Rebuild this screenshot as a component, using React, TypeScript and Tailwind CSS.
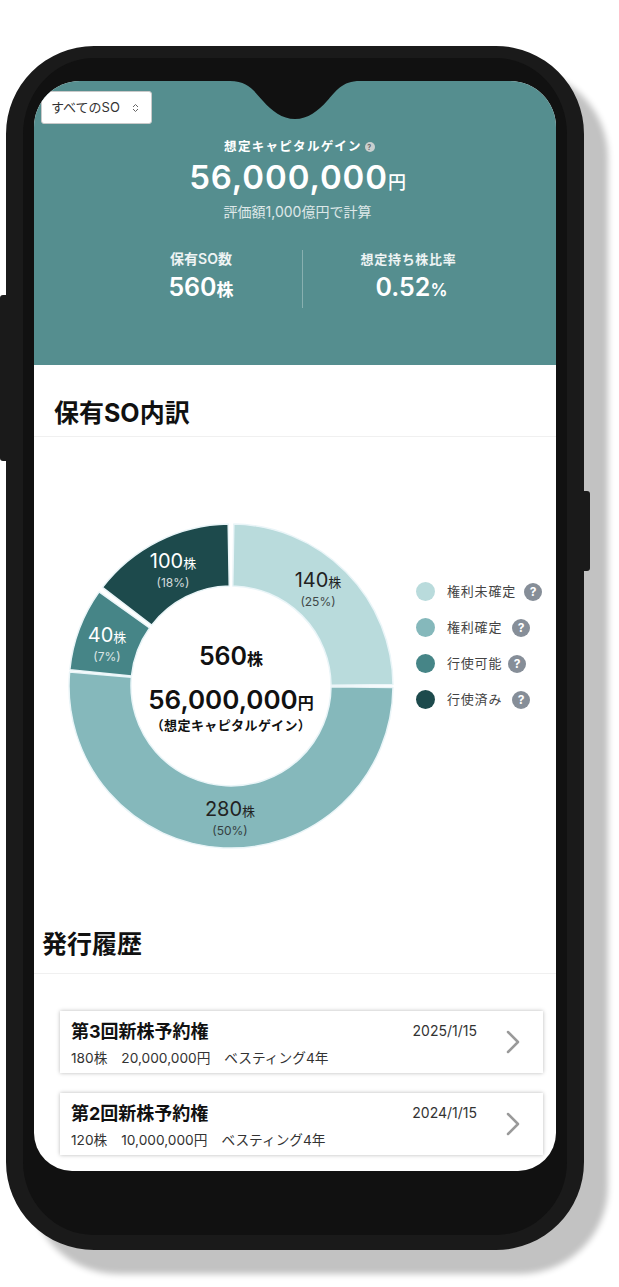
import { ChevronRight } from "lucide-react";

const FONT = "font-['Inter','Noto_Sans_CJK_JP',sans-serif]";

type Slice = {
  from: number;
  to: number;
  color: string;
};

const CX = 165;
const CY = 165;
const R_OUT = 162;
const R_IN = 100;

const slices: Slice[] = [
  { from: 1, to: 89.5, color: "#b9dbdc" },
  { from: 90.5, to: 275, color: "#85b8bb" },
  { from: 275.8, to: 305.5, color: "#468587" },
  { from: 307.5, to: 359, color: "#1d4a4c" },
];

function point(r: number, deg: number) {
  const a = ((deg - 90) * Math.PI) / 180;
  return `${(CX + r * Math.cos(a)).toFixed(2)} ${(CY + r * Math.sin(a)).toFixed(2)}`;
}

function slicePath({ from, to }: Slice) {
  const large = to - from > 180 ? 1 : 0;
  return [
    `M ${point(R_OUT, from)}`,
    `A ${R_OUT} ${R_OUT} 0 ${large} 1 ${point(R_OUT, to)}`,
    `L ${point(R_IN, to)}`,
    `A ${R_IN} ${R_IN} 0 ${large} 0 ${point(R_IN, from)}`,
    "Z",
  ].join(" ");
}

function SliceLabel({
  value,
  pct,
  className,
}: {
  value: string;
  pct: string;
  className: string;
}) {
  return (
    <div className={`absolute flex -translate-x-1/2 flex-col items-center whitespace-nowrap ${className}`}>
      <div className="text-[20px] leading-[22px]">
        {value}
        <span className="text-[13px]">株</span>
      </div>
      <div className="mt-[2px] text-[12px] leading-[14px] opacity-80">{pct}</div>
    </div>
  );
}

function HelpDot() {
  return (
    <span className="flex h-[18px] w-[18px] shrink-0 items-center justify-center rounded-full bg-[#868e98] text-[12px] font-bold leading-none text-white">
      ?
    </span>
  );
}

const legend = [
  { label: "権利未確定", color: "bg-[#b9dbdc]", gap: "mr-[8px]" },
  { label: "権利確定", color: "bg-[#85b8bb]", gap: "mr-[10px]" },
  { label: "行使可能", color: "bg-[#468587]", gap: "mr-[6px]" },
  { label: "行使済み", color: "bg-[#1d4a4c]", gap: "mr-[10px]" },
];

const grants = [
  {
    title: "第3回新株予約権",
    date: "2025/1/15",
    shares: "180株",
    amount: "20,000,000円",
    vest: "ベスティング4年",
  },
  {
    title: "第2回新株予約権",
    date: "2024/1/15",
    shares: "120株",
    amount: "10,000,000円",
    vest: "ベスティング4年",
  },
];

function GrantCard({ title, date, shares, amount, vest }: (typeof grants)[number]) {
  return (
    <div className="flex h-[62px] items-center justify-between bg-white pl-[11px] pr-[10px] shadow-[0_0_4px_rgba(0,0,0,0.28)]">
      <div className="min-w-0 flex-1 pt-[3px]">
        <div className="flex items-center justify-between pr-[16px]">
          <span className="text-[18px] font-bold leading-[24px] text-[#111]">{title}</span>
          <span className="mt-[-3px] text-[14px] text-[#333]">{date}</span>
        </div>
        <div className="mt-[5px] flex gap-[14px] text-[13.7px] leading-[18px] text-[#333]">
          <span>{shares}</span>
          <span>{amount}</span>
          <span>{vest}</span>
        </div>
      </div>
      <ChevronRight size={40} strokeWidth={1.5} className="shrink-0 text-[#9a9a9a]" />
    </div>
  );
}

export default function App() {
  return (
    <div className={`relative h-[1287px] w-[619px] overflow-hidden bg-white pl-[6px] pt-[46px] ${FONT}`}>
      {/* side buttons */}
      <div className="absolute left-0 top-[295px] h-[166px] w-[7px] rounded-l-[3px] bg-[#1a1a1a]" />
      <div className="absolute left-[583px] top-[491px] h-[80px] w-[7px] rounded-r-[3px] bg-[#1a1a1a]" />

      {/* phone */}
      <div className="h-[1204px] w-[578px] rounded-[88px] border-x-[17px] border-b-[15px] border-t-[12px] border-[#1a1a1a] bg-[#111] px-[11px] pt-[23px] shadow-[24px_24px_6px_#c2c2c2]">
        <div className="relative h-[1090px] w-[522px] overflow-hidden rounded-t-[46px] rounded-b-[38px] bg-white">
          {/* notch */}
          <svg className="absolute left-[196px] top-0 z-10" width="130" height="38" viewBox="0 0 130 38">
            <path
              d="M0 0 C18 0 24 10 33 20 C42 30 52 38 65 38 C78 38 88 30 97 20 C106 10 112 0 130 0 Z"
              fill="#111"
            />
          </svg>

          {/* header */}
          <header className="relative h-[284px] bg-[#558e8f] text-white">
            <div className="absolute left-[7px] top-[10px] flex h-[33px] w-[111px] items-center justify-between rounded-[3px] border border-[#c9c9c9] bg-white pl-[9px] pr-[12px] text-[13px] text-[#333]">
              <span>すべてのSO</span>
              <svg width="7" height="10" viewBox="0 0 7 10" fill="none" stroke="#666" strokeWidth="1">
                <path d="M1 4 L3.5 1.5 L6 4" />
                <path d="M1 6 L3.5 8.5 L6 6" />
              </svg>
            </div>

            <div className="flex flex-col items-center pt-[57px]">
              <div className="flex items-center pl-[9px] text-[12.5px] font-bold leading-[18px] tracking-[1.3px]">
                想定キャピタルゲイン
                <span className="ml-[3px] flex h-[10px] w-[10px] items-center justify-center rounded-full bg-[#c9cfcf] text-[7px] leading-none text-[#666]">
                  ?
                </span>
              </div>
              <div className="pl-[6px] text-[33px] font-semibold leading-[42px] tracking-[0.9px]">
                56,000,000<span className="text-[18px] font-medium">円</span>
              </div>
              <div className="mt-[-1px] pl-[5px] text-[14px] leading-[18px] text-white/80">評価額1,000億円で計算</div>
            </div>

            <div className="mt-[29px] grid grid-cols-[268px_1px_1fr]">
              <div className="flex flex-col items-center pl-[66px]">
                <div className="text-[14px] font-semibold leading-[18px] text-white/90">保有SO数</div>
                <div className="mt-[3px] text-[25px] font-semibold leading-[32px]">
                  560<span className="text-[17px]">株</span>
                </div>
              </div>
              <div className="h-[58px] bg-white/30" />
              <div className="flex flex-col items-center pr-[42px]">
                <div className="text-[13px] font-semibold leading-[18px] tracking-[0.7px] text-white/90">
                  想定持ち株比率
                </div>
                <div className="mt-[3px] pl-[6px] text-[25px] font-semibold leading-[32px]">
                  0.52<span className="text-[17px]">%</span>
                </div>
              </div>
            </div>
          </header>

          {/* breakdown */}
          <h2 className="h-[72px] border-b border-[#f0f0f0] pl-[20px] pt-[31px] text-[25px] font-bold leading-[34px] text-[#111]">
            保有SO内訳
          </h2>

          <div className="relative h-[465px]">
            <div className="absolute left-[32px] top-[84px] h-[330px] w-[330px] text-[#222]">
              <svg width="330" height="330" viewBox="0 0 330 330">
                {slices.map((s) => (
                  <path
                    key={s.color}
                    d={slicePath(s)}
                    fill={s.color}
                    stroke="#eaf5f8"
                    strokeWidth="1.5"
                    strokeLinejoin="round"
                  />
                ))}
              </svg>
              <SliceLabel value="140" pct="(25%)" className="left-[252px] top-[48px]" />
              <SliceLabel value="280" pct="(50%)" className="left-[164px] top-[277px]" />
              <SliceLabel value="40" pct="(7%)" className="left-[41px] top-[103px] text-white" />
              <SliceLabel value="100" pct="(18%)" className="left-[107px] top-[29px] text-white" />

              <div className="absolute left-[65px] top-[120px] flex w-[200px] flex-col items-center text-[#111]">
                <div className="text-[25px] font-semibold leading-[30px]">
                  560<span className="text-[16px]">株</span>
                </div>
                <div className="mt-[12px] whitespace-nowrap text-[26px] font-semibold leading-[28px]">
                  56,000,000<span className="text-[16px]">円</span>
                </div>
                <div className="whitespace-nowrap text-[13px] font-bold leading-[16px] tracking-[0.4px]">
                  （想定キャピタルゲイン）
                </div>
              </div>
            </div>

            <ul className="absolute left-[382px] top-[145px] flex flex-col gap-[17px]">
              {legend.map((item) => (
                <li key={item.label} className="flex h-[19px] items-center">
                  <span className={`h-[19px] w-[19px] rounded-full ${item.color}`} />
                  <span className={`ml-[12px] text-[13px] tracking-[0.8px] text-[#444] ${item.gap}`}>{item.label}</span>
                  <HelpDot />
                </li>
              ))}
            </ul>
          </div>

          {/* history */}
          <h2 className="h-[72px] border-b border-[#f0f0f0] pl-[8px] pt-[25px] text-[25px] font-bold leading-[34px] text-[#111]">
            発行履歴
          </h2>
          <div className="flex flex-col gap-[20px] pl-[26px] pr-[13px] pt-[37px]">
            {grants.map((g) => (
              <GrantCard key={g.title} {...g} />
            ))}
          </div>
        </div>
      </div>
    </div>
  );
}
